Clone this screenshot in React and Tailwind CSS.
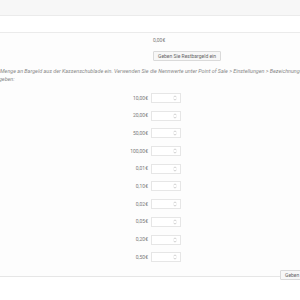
const coins = ['10,00€', '20,00€', '50,00€', '100,00€', '0,01€', '0,10€', '0,02€', '0,05€', '0,20€', '0,50€']

function Spinner() {
  return (
    <svg width="4" height="6" viewBox="0 0 4 6" className="shrink-0">
      <path d="M0.5 2.3 L2 0.8 L3.5 2.3" fill="none" stroke="#b0b0b0" strokeWidth="0.6" />
      <path d="M0.5 3.7 L2 5.2 L3.5 3.7" fill="none" stroke="#b0b0b0" strokeWidth="0.6" />
    </svg>
  )
}

export default function App() {
  return (
    <div className="w-[300px] h-[300px] overflow-hidden bg-white text-[#7a7a7a] text-[5px] leading-[7px] relative"
      style={{ fontFamily: 'Roboto, "Liberation Sans", sans-serif' }}>
      {/* header strip */}
      <div className="h-[16px] bg-[#f7f7f7] border-b border-[#ebebeb]" />
      <div className="h-[17px] border-b border-[#ebebeb]" />

      {/* body */}
      <div className="bg-[#fdfdfd] h-[243px]">
        <div className="pl-[153px] pt-[4px]">0,00€</div>
        <div className="pl-[153px] pt-[7px]">
          <button className="h-[10px] px-[4px] bg-[#f7f7f7] border border-[#dadada] rounded-[1px] text-[5px] leading-none text-[#666]">
            Geben Sie Restbargeld ein
          </button>
        </div>

        <div className="mt-[6px] whitespace-nowrap italic text-[#888] text-[5.4px] leading-[8px]">
          <div className="-ml-[33px]">Geben Sie die Menge an Bargeld aus der Kassenschublade ein. Verwenden Sie die Nennwerte unter Point of Sale &gt; Einstellungen &gt; Bezeichnungen</div>
          <div className="-ml-[8px]">eingeben:</div>
        </div>

        <div className="mt-[10px] flex flex-col gap-[7.7px]">
          {coins.map(c => (
            <div key={c} className="flex items-center h-[10px]">
              <div className="w-[150px] text-right pr-[2px]">{c}</div>
              <div className="ml-[1px] w-[30px] h-[10px] border border-[#e6e6e6] bg-white flex items-center justify-end pr-[3px]">
                <Spinner />
              </div>
            </div>
          ))}
        </div>
      </div>

      {/* footer */}
      <div className="border-t border-[#e6e6e6] bg-white h-[24px] relative">
        <button className="absolute left-[280px] -top-[7px] h-[10px] px-[4px] bg-[#f7f7f7] border border-[#dadada] rounded-[1px] text-[5px] leading-none text-[#666]">
          Geben
        </button>
      </div>
    </div>
  )
}
